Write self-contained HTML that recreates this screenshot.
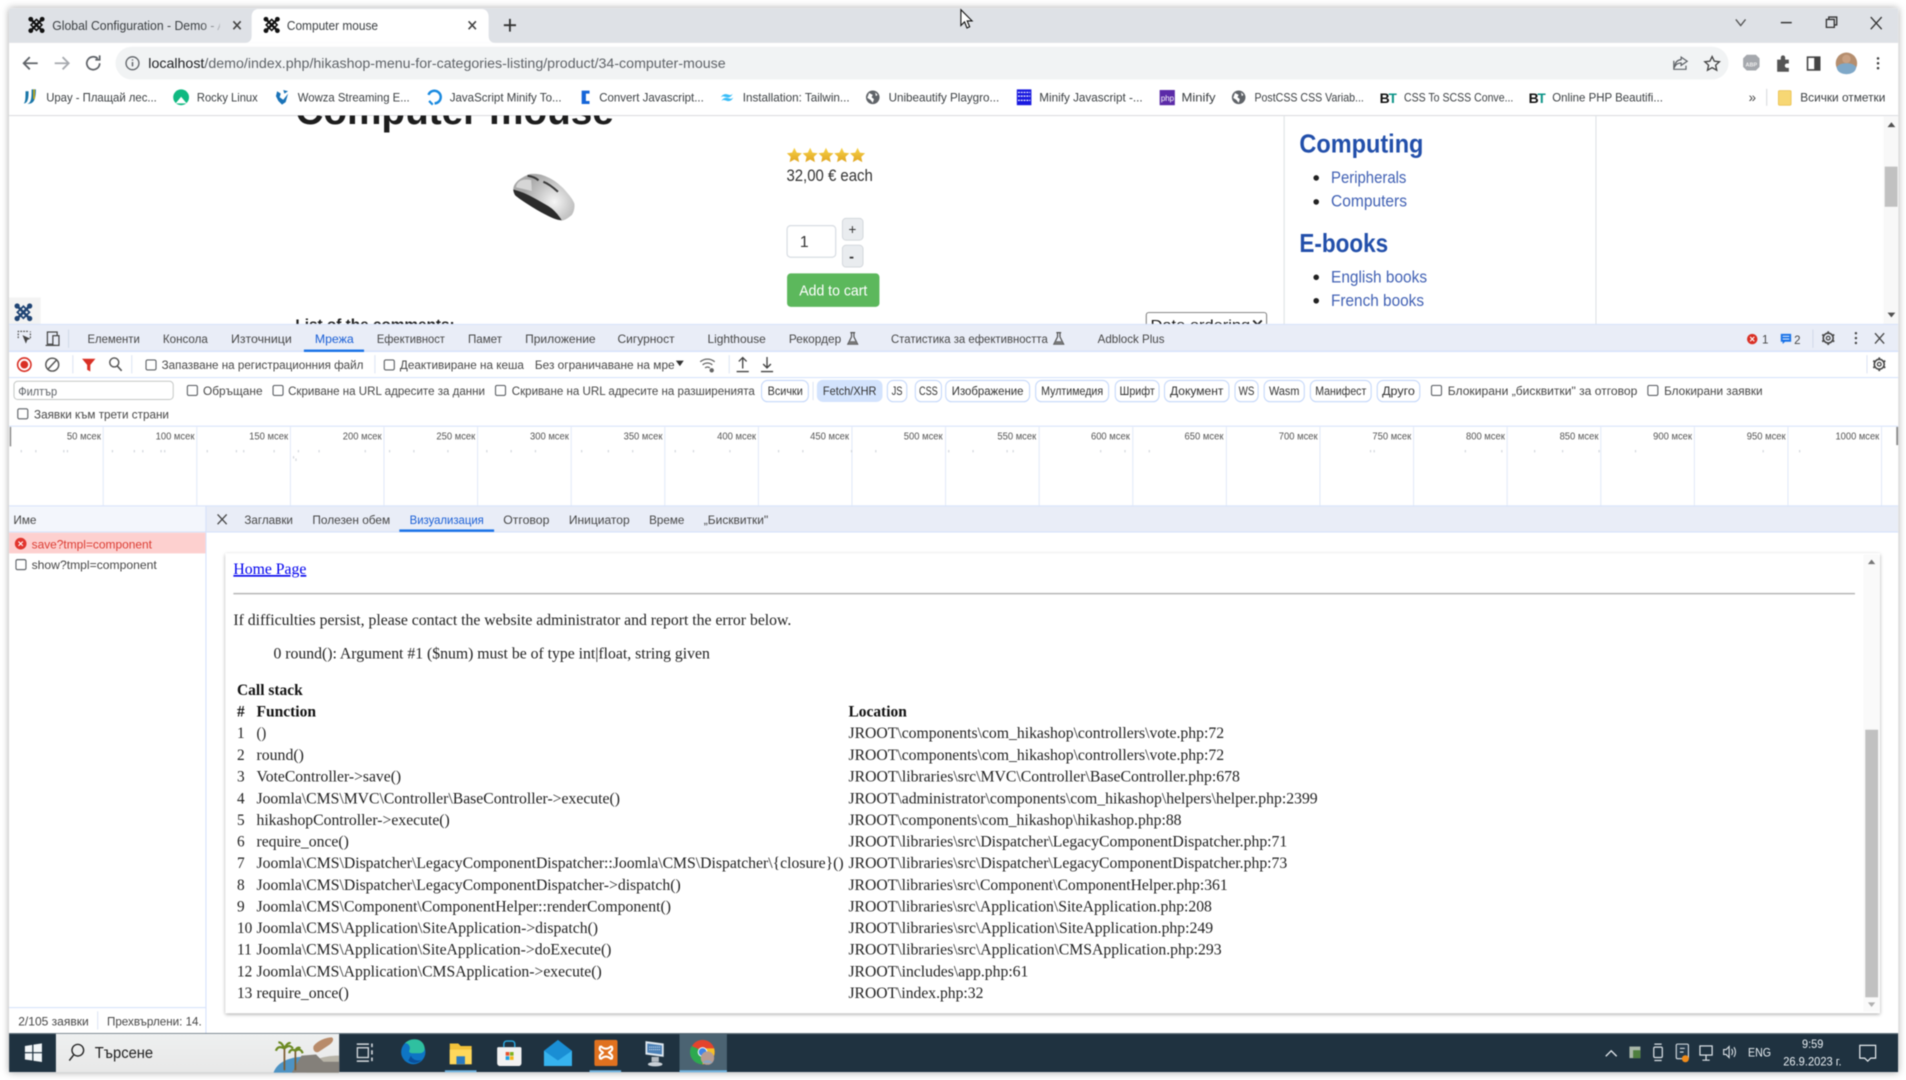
<!DOCTYPE html>
<html lang="bg"><head><meta charset="utf-8"><title>Computer mouse</title>
<style>
html,body{margin:0;padding:0;background:#fff;width:1906px;height:1080px;overflow:hidden}
svg{display:block;position:absolute;left:0;top:0;filter:blur(.4px)}
text{font-family:"Liberation Sans","Noto Sans CJK JP",sans-serif;font-size:10px;fill:#474747;white-space:pre}
.t{font-size:10.5px;fill:#3c4043}
.b{font-size:10px;fill:#3c4043}
.p{font-size:9.8px;fill:#333}
.m{font-size:8.2px;fill:#555}
.r{font-family:"Liberation Serif","Noto Serif CJK SC",serif;font-size:12.6px;fill:#222}
.rb{font-family:"Liberation Serif",serif;font-size:12.6px;font-weight:bold;fill:#111}
.s{font-size:13.5px;fill:#4161b4}
.h{font-size:21px;font-weight:bold;fill:#224faa}
.tb{font-size:9.5px;fill:#e8eef2}
</style></head><body>
<svg width="1906" height="1080" viewBox="0 0 1568 888" preserveAspectRatio="none" xmlns="http://www.w3.org/2000/svg">
<defs>
<filter id="ws" x="-2%" y="-2%" width="104%" height="104%"><feDropShadow dx="0" dy="0" stdDeviation="3" flood-color="#000" flood-opacity=".35"/></filter>
<filter id="bs" x="-2%" y="-3%" width="104%" height="106%"><feDropShadow dx="0" dy="1" stdDeviation="1.5" flood-color="#000" flood-opacity=".35"/></filter>
<linearGradient id="fade" x1="0" x2="1"><stop offset="0" stop-color="#dee1e6" stop-opacity="0"/><stop offset="1" stop-color="#dee1e6"/></linearGradient>
<radialGradient id="sil" gradientUnits="userSpaceOnUse" cx="456" cy="166" r="26"><stop offset="0" stop-color="#f6f6f6"/><stop offset=".55" stop-color="#c8c8c8"/><stop offset="1" stop-color="#a8a8a8"/></radialGradient>
<linearGradient id="gold" x1="0" y1="0" x2="0" y2="1"><stop offset="0" stop-color="#f8d34a"/><stop offset="1" stop-color="#e0a520"/></linearGradient>
<linearGradient id="sky" x1="0" y1="0" x2="0" y2="1"><stop offset="0" stop-color="#eef0f0"/><stop offset="1" stop-color="#e8e8e8"/></linearGradient>
<clipPath id="page"><rect x="8" y="95" width="1541" height="171.6"/></clipPath>
<clipPath id="taba"><rect x="40" y="8" width="141" height="28"/></clipPath>
<clipPath id="sb"><rect x="46" y="850" width="233" height="32"/></clipPath>
<symbol id="j" viewBox="0 0 16 16"><g fill="none" stroke="currentColor" stroke-linecap="round"><path d="M3.500 3.500L12.500 12.500M12.500 3.500L3.500 12.500" stroke-width="2"/><path d="M8 3.200L12.800 8 8 12.800 3.200 8z" stroke-width="1.400"/></g><g fill="currentColor"><circle cx="3" cy="3" r="2.100"/><circle cx="13" cy="3" r="2.100"/><circle cx="3" cy="13" r="2.100"/><circle cx="13" cy="13" r="2.100"/></g></symbol>
<symbol id="cb" viewBox="0 0 9 9"><rect x=".6" y=".6" width="7.8" height="7.8" rx="1.2" fill="#fff" stroke="#5f6368" stroke-width=".9"/></symbol>
<symbol id="gear" viewBox="0 0 16 16"><circle cx="8" cy="8" r="5" fill="none" stroke="#474747" stroke-width="1.6"/><circle cx="8" cy="8" r="1.9" fill="none" stroke="#474747" stroke-width="1.3"/><path d="M8 1v2.5M8 12.5V15M1.9 4.5l2.2 1.3M11.9 10.2l2.2 1.3M14.1 4.5l-2.2 1.3M4.1 10.2l-2.2 1.3" stroke="#474747" stroke-width="1.8"/></symbol>
<symbol id="fl" viewBox="0 0 10 12"><path d="M3 1h4M4 1v3.5L1 10.5h8L6 4.5V1" fill="none" stroke="#555" stroke-width="1"/><path d="M2.2 8h5.6l1 2.5H1.2z" fill="#777"/></symbol>
<symbol id="bt" viewBox="0 0 14 12"><text x="0" y="10.5" style="font-size:11.5px;font-weight:bold;fill:#111">B</text><text x="7.4" y="10.5" style="font-size:11.5px;font-weight:bold;fill:#0d9488">T</text></symbol>
<symbol id="glob" viewBox="0 0 12 12"><circle cx="6" cy="6" r="5.6" fill="#5f6368"/><path d="M3 2.5l3 1.5-1 2 2 1.5-1 3-2-2.5-2.5-1.5zM8 2l2 2-1.5 1z" fill="#fff"/></symbol>
</defs>

<rect width="1568" height="888" fill="#fff"/>
<rect x="7.5" y="6.8" width="1554" height="875" fill="#fff" filter="url(#ws)"/>

<!-- tab strip -->
<rect x="7.5" y="6.8" width="1554" height="28.5" fill="#dee1e6"/>
<path d="M201 35.3c4 0 6-2 6-6V14c0-4 2-6.6 6-6.6h183c4 0 6 2.6 6 6.6v15.3c0 4 2 6 6 6z" fill="#fff"/>
<use href="#j" x="22.5" y="13" width="15" height="15" color="#111"/>
<g clip-path="url(#taba)"><text class="t" x="43" y="24.5" textLength="148" lengthAdjust="spacingAndGlyphs">Global Configuration - Demo - Ad</text></g>
<rect x="165" y="10" width="20" height="24" fill="url(#fade)"/>
<path d="M192 17.5l6 6.5M198 17.5l-6 6.5" stroke="#444" stroke-width="1.3"/>
<use href="#j" x="216" y="13" width="15" height="15" color="#111"/>
<text class="t" x="236" y="24.5" textLength="75" lengthAdjust="spacingAndGlyphs">Computer mouse</text>
<path d="M385.5 17.5l6 6.5M391.5 17.5l-6 6.5" stroke="#444" stroke-width="1.3"/>
<path d="M419.5 15.5v10.5M414.5 20.7h10" stroke="#333" stroke-width="1.5"/>
<!-- window controls -->
<path d="M1428 16l4 5 4-5" fill="none" stroke="#555" stroke-width="1.1"/>
<path d="M1465 18.6h9" stroke="#333" stroke-width="1.2"/>
<path d="M1502.5 16h6.5v6.5h-6.5zM1504.5 16v-2h6.5v6.5h-2" fill="none" stroke="#333" stroke-width="1.1"/>
<path d="M1539 14l9 10M1548 14l-9 10" stroke="#333" stroke-width="1.1"/>

<!-- address row -->
<rect x="7.5" y="35.3" width="1554" height="30" fill="#fff"/>
<rect x="95" y="38.4" width="1327" height="27" rx="13.5" fill="#f1f3f4"/>
<path d="M31 52H20m4.5-5l-5 5 5 5" fill="none" stroke="#5f6368" stroke-width="1.5"/>
<path d="M45 52h11m-4.5-5l5 5-5 5" fill="none" stroke="#a6a9ae" stroke-width="1.5"/>
<path d="M82 52a5.3 5.3 0 1 1-1.6-3.8M82 45.5v3.6h-3.6" fill="none" stroke="#5f6368" stroke-width="1.4"/>
<circle cx="109" cy="52" r="5.3" fill="none" stroke="#5f6368" stroke-width="1.1"/><path d="M109 51v3.6M109 48.8v1" stroke="#5f6368" stroke-width="1.2"/>
<text x="122" y="56" style="font-size:11.5px" textLength="475" lengthAdjust="spacingAndGlyphs"><tspan style="fill:#202124">localhost</tspan><tspan style="fill:#5f6368">/demo/index.php/hikashop-menu-for-categories-listing/product/34-computer-mouse</tspan></text>
<path d="M1383 47l5 3.4-5 3.4v-2c-2.4 0-4 .8-5 2.6 0-3 1.700-5 5-5.400zM1377 50v7h10v-3" fill="none" stroke="#5f6368" stroke-width="1"/>
<path d="M1408.500 46.500l1.800 3.800 4.200.5-3.100 2.800.9 4.100-3.800-2.100-3.800 2.100.9-4.100-3.100-2.800 4.200-.5z" fill="none" stroke="#444" stroke-width="1.100"/>
<path d="M1437 45.500h7.500l3 3v7l-3 3H1437l-3-3v-7z" transform="translate(0,-.5)" fill="#a5a8ad"/><text x="1436" y="54.500" style="font-size:4.500px;fill:#eee;font-weight:bold">ABP</text>
<path d="M1462 49h3v-1.700a1.800 1.800 0 0 1 3.600 0V49h3v3.200h-1.500a1.800 1.800 0 0 0 0 3.600h1.500V59h-9.600z" fill="#555"/>
<rect x="1487" y="47" width="10" height="10.500" fill="none" stroke="#444" stroke-width="1.300"/><rect x="1492.500" y="47" width="4.500" height="10.500" fill="#444"/>
<circle cx="1519" cy="52" r="8.800" fill="#b58e6e"/><path d="M1511 55c2-2 4-3 8-3s6 1 8 3c0 4-4 6-8 6s-8-2-8-6z" fill="#7fa8c8"/><circle cx="1519" cy="48.500" r="3.500" fill="#c9a183"/>
<circle cx="1545" cy="48" r="1.050" fill="#444"/><circle cx="1545" cy="52" r="1.050" fill="#444"/><circle cx="1545" cy="56" r="1.050" fill="#444"/>

<!-- bookmarks -->
<rect x="7.500" y="65.300" width="1554" height="29.700" fill="#fff"/>
<rect x="7.500" y="94.600" width="1554" height="1" fill="#dadce0"/>
<path d="M21 75c0 5 0 9-1.500 10 4 0 4-6 4-10zM26 73.500c0 6 0 11-3.500 12 5 0 7-3 7-12z" fill="#1976a8"/><path d="M28 73.500v8" stroke="#e0b300" stroke-width="1.200"/>
<text class="b" x="38" y="83.500" textLength="91" lengthAdjust="spacingAndGlyphs">Upay - Плащай лес...</text>
<circle cx="149" cy="80" r="6.500" fill="#10b981"/><path d="M149 79.500l4.500 5.500h-9z" fill="#fff"/>
<text class="b" x="162" y="83.500" textLength="50" lengthAdjust="spacingAndGlyphs">Rocky Linux</text>
<path d="M228 75l3 2-1 3 3 2 4-5-2 7-3 2-3-3-2-4zM233 74l4 1-3 2z" fill="#1a73b8"/>
<text class="b" x="245" y="83.500" textLength="92" lengthAdjust="spacingAndGlyphs">Wowza Streaming E...</text>
<path d="M352.500 78a5.200 5.200 0 1 1 5 7" fill="none" stroke="#1a8ae0" stroke-width="2"/><path d="M353 83l3 3" stroke="#1a8ae0" stroke-width="1.800"/>
<text class="b" x="370" y="83.500" textLength="92" lengthAdjust="spacingAndGlyphs">JavaScript Minify To...</text>
<path d="M485 74.500h-6.500v11h6.500v-2.500h-3v-6h3z" fill="#1565d8"/>
<text class="b" x="493" y="83.500" textLength="86" lengthAdjust="spacingAndGlyphs">Convert Javascript...</text>
<path d="M593 80c1-2 3-3 5-2.500s3 1.500 4.800-.5c-1 2.500-3 3.500-5 3s-3-1.500-4.800 0zM593.500 83c1-2 3-3 5-2.500s3 1.500 4.800-.5c-1 2.500-3 3.500-5 3s-3-1.500-4.800 0z" fill="#38bdf8"/>
<text class="b" x="611" y="83.500" textLength="88" lengthAdjust="spacingAndGlyphs">Installation: Tailwin...</text>
<use href="#glob" x="712" y="74" width="12" height="12"/>
<text class="b" x="731" y="83.500" textLength="91" lengthAdjust="spacingAndGlyphs">Unibeautify Playgro...</text>
<rect x="836.500" y="73.500" width="12" height="13" fill="#1a1ae0"/><path d="M837.500 76h10M837.500 79h10M837.500 82.500h10" stroke="#fff" stroke-width="1" stroke-dasharray="1.500 .8"/>
<text class="b" x="855" y="83.500" textLength="85" lengthAdjust="spacingAndGlyphs">Minify Javascript -...</text>
<rect x="954" y="74" width="12.500" height="12.500" fill="#5b2aa8"/><text x="955" y="83" style="font-size:6.500px;fill:#fff">php</text>
<text class="b" x="972" y="83.500" textLength="28" lengthAdjust="spacingAndGlyphs">Minify</text>
<use href="#glob" x="1013" y="74" width="12" height="12"/>
<text class="b" x="1032" y="83.500" textLength="90" lengthAdjust="spacingAndGlyphs">PostCSS CSS Variab...</text>
<use href="#bt" x="1135" y="74" width="14" height="12"/>
<text class="b" x="1155" y="83.500" textLength="90" lengthAdjust="spacingAndGlyphs">CSS To SCSS Conve...</text>
<use href="#bt" x="1257.500" y="74" width="14" height="12"/>
<text class="b" x="1277" y="83.500" textLength="91" lengthAdjust="spacingAndGlyphs">Online PHP Beautifi...</text>
<text x="1438.500" y="84" style="font-size:11px;fill:#444">»</text>
<rect x="1453" y="73" width=".8" height="14" fill="#d5d7db"/>
<rect x="1463" y="74.500" width="10.500" height="12" rx="1" fill="#f7d774" stroke="#e8bf4c" stroke-width=".6"/>
<text class="b" x="1481" y="83.500" textLength="70" lengthAdjust="spacingAndGlyphs">Всички отметки</text>

<!-- web page -->
<rect x="7.500" y="95.500" width="1554" height="171" fill="#fff"/>
<g clip-path="url(#page)">
<text x="243" y="102" style="font-size:33px;font-weight:bold;fill:#1d1d1d" textLength="262" lengthAdjust="spacingAndGlyphs">Computer mouse</text>
<text x="243" y="271" style="font-size:12px;font-weight:bold;fill:#1d1d1d" textLength="131" lengthAdjust="spacingAndGlyphs">List of the comments:</text>
<rect x="943" y="257" width="99" height="25" rx="2" fill="#fff" stroke="#777" stroke-width=".8"/>
<text x="946.500" y="271" style="font-size:11.500px;fill:#111" textLength="82" lengthAdjust="spacingAndGlyphs">Date ordering</text>
<path d="M1031 263.500l3.500 3.500 3.500-3.500" fill="none" stroke="#222" stroke-width="1.500"/>
</g>
<!-- stars -->
<g fill="url(#gold)">
<path d="M653.500 121.500l1.900 4 4.300.5-3.200 3 .9 4.300-3.900-2.200-3.900 2.200.9-4.300-3.200-3 4.300-.5z"/>
<path d="M666.500 121.500l1.900 4 4.300.5-3.200 3 .9 4.300-3.900-2.200-3.900 2.200.9-4.300-3.200-3 4.300-.5z"/>
<path d="M679.500 121.500l1.900 4 4.300.5-3.200 3 .9 4.300-3.900-2.200-3.900 2.200.9-4.300-3.200-3 4.300-.5z"/>
<path d="M692.500 121.500l1.900 4 4.300.5-3.200 3 .9 4.300-3.900-2.200-3.900 2.200.9-4.300-3.200-3 4.300-.5z"/>
<path d="M705.500 121.500l1.900 4 4.300.5-3.200 3 .9 4.300-3.900-2.200-3.900 2.200.9-4.300-3.200-3 4.300-.5z"/>
</g>
<text x="647" y="149" style="font-size:13.400px;fill:#333" textLength="71" lengthAdjust="spacingAndGlyphs">32,00 € each</text>
<rect x="647.500" y="185.500" width="40" height="26" rx="3" fill="#fff" stroke="#d8dde3" stroke-width="1"/>
<text x="658" y="203" style="font-size:13px;fill:#333">1</text>
<rect x="693" y="179.500" width="17" height="18" rx="3" fill="#e9ecef" stroke="#d0d4d9" stroke-width=".7"/><text x="698" y="192.500" style="font-size:11px;fill:#333">+</text>
<rect x="693" y="201.600" width="17" height="18" rx="3" fill="#e9ecef" stroke="#d0d4d9" stroke-width=".7"/><text x="698.500" y="215" style="font-size:12px;font-weight:bold;fill:#333">-</text>
<rect x="647.500" y="224.800" width="76" height="27.500" rx="3" fill="#5cb85c"/>
<text x="657.500" y="243" style="font-size:11.800px;fill:#fff" textLength="56" lengthAdjust="spacingAndGlyphs">Add to cart</text>
<!-- mouse -->
<path d="M422.300 154.900C423 151 426 147 436 143.100C442 142.500 446 143.500 449.700 145.300C456 148 460 151.500 463.500 154.900C468 160 471 163.500 472.500 167.300C473 171 472 174.500 470.300 176.900C467 179.500 465 181 462.100 181.500C458 181 454 179 449.700 176.900C444 174 439 171 433.300 167.300C429 164.500 426 162.500 423.700 160.400C422.500 158.500 422 156.500 422.300 154.900z" fill="url(#sil)"/>
<path d="M422.300 155.800C425 156.500 428 157.500 430.500 158.500C434 160 437 161.500 440.100 163.200C445 166 450 168.500 453.900 171.400C457 174 460 177.500 462.100 181C458 181 454 179 449.700 176.900C444 174 439 171 433.300 167.300C429 164.500 426 162.500 423.700 160.400C422.800 158.500 422.300 157 422.300 155.800z" fill="#2b2b2b"/>
<path d="M434 144.500C438 145 441 146.500 443 148.300M447 149.500C451 151 455 154 459 157.700" fill="none" stroke="#3a3a3a" stroke-width="1.700"/>
<path d="M425 152C427 148 431 147 437 148L437.500 157L424.500 154z" fill="#d6d6d6"/>
<!-- sidebar -->
<rect x="1056" y="95.500" width=".9" height="171" fill="#dee2e6"/>
<rect x="1312.500" y="95.500" width=".9" height="171" fill="#dee2e6"/>
<text class="h" x="1069" y="125.500" textLength="102" lengthAdjust="spacingAndGlyphs">Computing</text>
<circle cx="1082.800" cy="146.300" r="2.300" fill="#222"/>
<text class="s" x="1095" y="150.500" textLength="62" lengthAdjust="spacingAndGlyphs">Peripherals</text>
<circle cx="1082.800" cy="166" r="2.300" fill="#222"/>
<text class="s" x="1095" y="170" textLength="62.500" lengthAdjust="spacingAndGlyphs">Computers</text>
<text class="h" x="1069" y="207" textLength="73" lengthAdjust="spacingAndGlyphs">E-books</text>
<circle cx="1082.800" cy="228" r="2.300" fill="#222"/>
<text class="s" x="1095" y="232.300" textLength="79" lengthAdjust="spacingAndGlyphs">English books</text>
<circle cx="1082.800" cy="247.300" r="2.300" fill="#222"/>
<text class="s" x="1095" y="251.800" textLength="76.500" lengthAdjust="spacingAndGlyphs">French books</text>
<!-- page scrollbar -->
<rect x="1549.500" y="95.500" width="12" height="171" fill="#f8f8f8"/>
<rect x="1550.500" y="137" width="10.500" height="33" fill="#c1c1c1"/>
<path d="M1556 100.500l3.200 4h-6.400z" fill="#505050"/><path d="M1556 261l3.200-4h-6.400z" fill="#505050"/>
<!-- joomla tab -->
<rect x="7.500" y="244.600" width="26" height="22" fill="#f3f3f3"/>
<use href="#j" x="11" y="248" width="16.500" height="17.500" color="#1f4474"/>

<!-- devtools tabbar -->
<rect x="7.500" y="266.600" width="1554" height="22" fill="#e9edf7"/>
<rect x="7.500" y="288.300" width="1554" height="1.200" fill="#d6e2fb"/>
<rect x="7.500" y="266.300" width="1554" height=".8" fill="#d6e2fb"/>
<path d="M15 278v-5.500h8M25 278v-5.500" stroke="#555" stroke-width="1" stroke-dasharray="1.400 1" fill="none"/><path d="M18.500 275.500l6.500 3-2.500 1-1.200 3z" fill="#444"/>
<rect x="39" y="273" width="8" height="10" fill="none" stroke="#444" stroke-width="1"/><rect x="43.500" y="276" width="5" height="8" fill="#e9edf7" stroke="#444" stroke-width="1"/><path d="M37.500 284h8" stroke="#444" stroke-width="1"/>
<rect x="56" y="271" width=".8" height="15" fill="#d0d8e8"/>
<text x="72" y="282" textLength="43" lengthAdjust="spacingAndGlyphs">Елементи</text>
<text x="134" y="282" textLength="37" lengthAdjust="spacingAndGlyphs">Консола</text>
<text x="190" y="282" textLength="50" lengthAdjust="spacingAndGlyphs">Източници</text>
<text x="259" y="282" textLength="32" lengthAdjust="spacingAndGlyphs" style="fill:#1a5fd6">Мрежа</text>
<rect x="250" y="287.400" width="49.500" height="2" fill="#1a73e8"/>
<text x="310" y="282" textLength="56" lengthAdjust="spacingAndGlyphs">Ефективност</text>
<text x="385" y="282" textLength="28" lengthAdjust="spacingAndGlyphs">Памет</text>
<text x="432" y="282" textLength="58" lengthAdjust="spacingAndGlyphs">Приложение</text>
<text x="508" y="282" textLength="47" lengthAdjust="spacingAndGlyphs">Сигурност</text>
<text x="582" y="282" textLength="48" lengthAdjust="spacingAndGlyphs">Lighthouse</text>
<text x="649" y="282" textLength="43" lengthAdjust="spacingAndGlyphs">Рекордер</text>
<use href="#fl" x="696.500" y="272.500" width="10" height="12"/>
<text x="733" y="282" textLength="129" lengthAdjust="spacingAndGlyphs">Статистика за ефективността</text>
<use href="#fl" x="866" y="272.500" width="10" height="12"/>
<text x="903" y="282" textLength="55" lengthAdjust="spacingAndGlyphs">Adblock Plus</text>
<circle cx="1441.500" cy="278.800" r="4.300" fill="#d93025"/><path d="M1439.800 277l3.400 3.600M1443.200 277l-3.400 3.600" stroke="#fff" stroke-width=".9"/>
<text x="1449.500" y="282.500" style="font-size:9.500px">1</text>
<path d="M1465 274.500h8.500v6.500h-5l-2 1.800V281H1465z" fill="#1a73e8"/><path d="M1466.500 276.500h5.500M1466.500 278.800h5.500" stroke="#fff" stroke-width=".7"/>
<text x="1476" y="283" style="font-size:9.500px">2</text>
<rect x="1491" y="271" width=".8" height="15" fill="#d0d8e8"/>
<use href="#gear" x="1497.500" y="271.500" width="13" height="13"/>
<circle cx="1526.800" cy="274" r="1" fill="#474747"/><circle cx="1526.800" cy="278" r="1" fill="#474747"/><circle cx="1526.800" cy="282" r="1" fill="#474747"/>
<path d="M1542.500 274l7.500 8.500M1550 274l-7.500 8.500" stroke="#474747" stroke-width="1.100"/>

<!-- toolbar row -->
<rect x="7.500" y="289.500" width="1554" height="20.500" fill="#fff"/>
<rect x="7.500" y="310" width="1554" height=".9" fill="#d6e2fb"/>
<circle cx="20" cy="299.800" r="5.500" fill="none" stroke="#d93025" stroke-width="1.300"/><circle cx="20" cy="299.800" r="3.200" fill="#d93025"/>
<circle cx="43" cy="299.800" r="5.300" fill="none" stroke="#555" stroke-width="1.200"/><path d="M39.500 303.500l7-7.500" stroke="#555" stroke-width="1.200"/>
<rect x="59.500" y="292" width=".8" height="15" fill="#dbe3f3"/>
<path d="M67.500 295h11l-4.200 5v5.500l-2.600-1.500v-4z" fill="#d93025"/>
<circle cx="94" cy="298" r="3.700" fill="none" stroke="#555" stroke-width="1.200"/><path d="M96.500 301l3.600 3.900" stroke="#555" stroke-width="1.300"/>
<rect x="108" y="292" width=".8" height="15" fill="#dbe3f3"/>
<use href="#cb" x="119.500" y="295.300" width="9.500" height="9.500"/>
<text x="133" y="303.300" textLength="166" lengthAdjust="spacingAndGlyphs">Запазване на регистрационния файл</text>
<rect x="308" y="292" width=".8" height="15" fill="#dbe3f3"/>
<use href="#cb" x="315.500" y="295.300" width="9.500" height="9.500"/>
<text x="329" y="303.300" textLength="102" lengthAdjust="spacingAndGlyphs">Деактивиране на кеша</text>
<text x="440" y="303.300" textLength="115" lengthAdjust="spacingAndGlyphs">Без ограничаване на мре</text>
<path d="M556 296.500h6.500l-3.200 4.500z" fill="#333"/>
<path d="M576 297.500c3.500-3 8.500-3 12 0M578 300c2.400-2 5.600-2 8 0M580 302.500c1.300-1 2.700-1 4 0" fill="none" stroke="#666" stroke-width="1"/><circle cx="585.500" cy="304.500" r="1.800" fill="#666"/>
<rect x="599.500" y="292" width=".8" height="15" fill="#dbe3f3"/>
<path d="M611 303v-9m-3.200 3.200l3.200-3.200 3.200 3.200M606 305.500h10" fill="none" stroke="#444" stroke-width="1.100"/>
<path d="M631 293.500v9m-3.200-3.200l3.200 3.200 3.200-3.200M626 305.500h10" fill="none" stroke="#444" stroke-width="1.100"/>
<rect x="1535.500" y="292" width=".8" height="15" fill="#dbe3f3"/>
<use href="#gear" x="1539.500" y="293" width="13" height="13"/>

<!-- filter row -->
<rect x="7.500" y="311" width="1554" height="39.200" fill="#fff"/>
<rect x="11.500" y="313.500" width="131" height="15" rx="3" fill="#fff" stroke="#c4c7c5" stroke-width=".8"/>
<text x="15" y="325" textLength="32" lengthAdjust="spacingAndGlyphs" style="fill:#5f6368">Филтър</text>
<use href="#cb" x="153.500" y="316.300" width="9.500" height="9.500"/>
<text x="167" y="324.800" textLength="49" lengthAdjust="spacingAndGlyphs">Обръщане</text>
<use href="#cb" x="224" y="316.300" width="9.500" height="9.500"/>
<text x="237" y="324.800" textLength="162" lengthAdjust="spacingAndGlyphs">Скриване на URL адресите за данни</text>
<use href="#cb" x="407" y="316.300" width="9.500" height="9.500"/>
<text x="421" y="324.800" textLength="200" lengthAdjust="spacingAndGlyphs">Скриване на URL адресите на разширенията</text>
<g fill="#fff" stroke="#c5d8fa" stroke-width=".9">
<rect x="626.500" y="312.800" width="38.500" height="17.500" rx="5"/>
<rect x="730" y="312.800" width="16" height="17.500" rx="5"/>
<rect x="753" y="312.800" width="21.500" height="17.500" rx="5"/>
<rect x="778" y="312.800" width="69" height="17.500" rx="5"/>
<rect x="852" y="312.800" width="60" height="17.500" rx="5"/>
<rect x="917.500" y="312.800" width="36" height="17.500" rx="5"/>
<rect x="958" y="312.800" width="53" height="17.500" rx="5"/>
<rect x="1016" y="312.800" width="19" height="17.500" rx="5"/>
<rect x="1040" y="312.800" width="33" height="17.500" rx="5"/>
<rect x="1078" y="312.800" width="50" height="17.500" rx="5"/>
<rect x="1133" y="312.800" width="35" height="17.500" rx="5"/>
</g>
<rect x="672" y="312.300" width="54" height="18.200" rx="5" fill="#d3e3fd"/>
<rect x="668.500" y="314" width=".8" height="15" fill="#dbe3f3"/>
<g>
<text class="p" x="631.500" y="324.800" textLength="29" lengthAdjust="spacingAndGlyphs">Всички</text>
<text class="p" x="677" y="324.800" textLength="44" lengthAdjust="spacingAndGlyphs">Fetch/XHR</text>
<text class="p" x="733.500" y="324.800" textLength="9" lengthAdjust="spacingAndGlyphs">JS</text>
<text class="p" x="756" y="324.800" textLength="15.500" lengthAdjust="spacingAndGlyphs">CSS</text>
<text class="p" x="783" y="324.800" textLength="59" lengthAdjust="spacingAndGlyphs">Изображение</text>
<text class="p" x="856.500" y="324.800" textLength="51" lengthAdjust="spacingAndGlyphs">Мултимедия</text>
<text class="p" x="921" y="324.800" textLength="29" lengthAdjust="spacingAndGlyphs">Шрифт</text>
<text class="p" x="962.500" y="324.800" textLength="44" lengthAdjust="spacingAndGlyphs">Документ</text>
<text class="p" x="1019" y="324.800" textLength="13" lengthAdjust="spacingAndGlyphs">WS</text>
<text class="p" x="1044" y="324.800" textLength="25" lengthAdjust="spacingAndGlyphs">Wasm</text>
<text class="p" x="1082" y="324.800" textLength="42" lengthAdjust="spacingAndGlyphs">Манифест</text>
<text class="p" x="1137" y="324.800" textLength="27" lengthAdjust="spacingAndGlyphs">Друго</text>
</g>
<use href="#cb" x="1177" y="316.300" width="9.500" height="9.500"/>
<text x="1191" y="324.800" textLength="156" lengthAdjust="spacingAndGlyphs">Блокирани „бисквитки" за отговор</text>
<use href="#cb" x="1355" y="316.300" width="9.500" height="9.500"/>
<text x="1369" y="324.800" textLength="81" lengthAdjust="spacingAndGlyphs">Блокирани заявки</text>
<use href="#cb" x="14" y="335.500" width="9.500" height="9.500"/>
<text x="28" y="344" textLength="111" lengthAdjust="spacingAndGlyphs">Заявки към трети страни</text>
<rect x="7.500" y="350" width="1554" height=".9" fill="#d6e2fb"/>

<!-- timeline -->
<rect x="7.500" y="351" width="1554" height="64.500" fill="#fff"/>
<g fill="#dfe8f8">
<rect x="84.500" y="351" width=".8" height="64.500"/><rect x="161.500" y="351" width=".8" height="64.500"/><rect x="238.500" y="351" width=".8" height="64.500"/><rect x="315.500" y="351" width=".8" height="64.500"/><rect x="392.500" y="351" width=".8" height="64.500"/><rect x="469.500" y="351" width=".8" height="64.500"/><rect x="546.500" y="351" width=".8" height="64.500"/><rect x="623.500" y="351" width=".8" height="64.500"/><rect x="700.500" y="351" width=".8" height="64.500"/><rect x="777.500" y="351" width=".8" height="64.500"/><rect x="854.500" y="351" width=".8" height="64.500"/><rect x="931.500" y="351" width=".8" height="64.500"/><rect x="1008.500" y="351" width=".8" height="64.500"/><rect x="1085.500" y="351" width=".8" height="64.500"/><rect x="1162.500" y="351" width=".8" height="64.500"/><rect x="1239.500" y="351" width=".8" height="64.500"/><rect x="1316.500" y="351" width=".8" height="64.500"/><rect x="1393.500" y="351" width=".8" height="64.500"/><rect x="1470.500" y="351" width=".8" height="64.500"/><rect x="1547.500" y="351" width=".8" height="64.500"/>
</g>
<g>
<text class="m" x="55" y="361.500" textLength="28" lengthAdjust="spacingAndGlyphs">50 мсек</text>
<text class="m" x="128" y="361.500" textLength="32" lengthAdjust="spacingAndGlyphs">100 мсек</text>
<text class="m" x="205" y="361.500" textLength="32" lengthAdjust="spacingAndGlyphs">150 мсек</text>
<text class="m" x="282" y="361.500" textLength="32" lengthAdjust="spacingAndGlyphs">200 мсек</text>
<text class="m" x="359" y="361.500" textLength="32" lengthAdjust="spacingAndGlyphs">250 мсек</text>
<text class="m" x="436" y="361.500" textLength="32" lengthAdjust="spacingAndGlyphs">300 мсек</text>
<text class="m" x="513" y="361.500" textLength="32" lengthAdjust="spacingAndGlyphs">350 мсек</text>
<text class="m" x="590" y="361.500" textLength="32" lengthAdjust="spacingAndGlyphs">400 мсек</text>
<text class="m" x="666.500" y="361.500" textLength="32" lengthAdjust="spacingAndGlyphs">450 мсек</text>
<text class="m" x="743.500" y="361.500" textLength="32" lengthAdjust="spacingAndGlyphs">500 мсек</text>
<text class="m" x="820.500" y="361.500" textLength="32" lengthAdjust="spacingAndGlyphs">550 мсек</text>
<text class="m" x="897.500" y="361.500" textLength="32" lengthAdjust="spacingAndGlyphs">600 мсек</text>
<text class="m" x="974.500" y="361.500" textLength="32" lengthAdjust="spacingAndGlyphs">650 мсек</text>
<text class="m" x="1052" y="361.500" textLength="32" lengthAdjust="spacingAndGlyphs">700 мсек</text>
<text class="m" x="1129" y="361.500" textLength="32" lengthAdjust="spacingAndGlyphs">750 мсек</text>
<text class="m" x="1206" y="361.500" textLength="32" lengthAdjust="spacingAndGlyphs">800 мсек</text>
<text class="m" x="1283" y="361.500" textLength="32" lengthAdjust="spacingAndGlyphs">850 мсек</text>
<text class="m" x="1360" y="361.500" textLength="32" lengthAdjust="spacingAndGlyphs">900 мсек</text>
<text class="m" x="1437" y="361.500" textLength="32" lengthAdjust="spacingAndGlyphs">950 мсек</text>
<text class="m" x="1510" y="361.500" textLength="36" lengthAdjust="spacingAndGlyphs">1000 мсек</text>
</g>
<path d="M17 371h1M29 371h1M52 371h1M55 371h1M92 371h1M110 371h1M117 371h1M132 371h1M135 371h1M170 371h1M194 371h1M200 371h1M225 371h1M245 371h1M262 371h1M300 371h1M320 371h1M340 371h1M368 371h1M400 371h1M420 371h1M440 371h1M478 371h1M500 371h1M520 371h1M555 371h1M570 371h1M600 371h1M640 371h1M660 371h1M700 371h1M720 371h1M780 371h1M800 371h1M828 371h1M833 371h1M905 371h1M925 371h1M945 371h1M1127 371h1M1130 371h1M1205 371h1M1235 371h1M1262 371h1M1285 371h1M1315 371h1M1345 371h1M1450 371h1M1480 371h1M241 376h1M243 378h1" stroke="#d3d7dd" stroke-width="2" fill="none"/>
<rect x="8" y="351" width="1.200" height="16" fill="#888"/>
<rect x="1560" y="351" width="1.500" height="15" fill="#888"/>
<rect x="7.500" y="415.500" width="1554" height=".9" fill="#d6e2fb"/>

<!-- detail header -->
<rect x="7.500" y="416.400" width="162" height="21" fill="#f3f6fc"/>
<rect x="169" y="416.400" width="1392.500" height="21" fill="#e9edf7"/>
<rect x="7.500" y="437" width="1554" height=".9" fill="#d6e2fb"/>
<text x="11" y="431" textLength="19" lengthAdjust="spacingAndGlyphs">Име</text>
<path d="M179 423l7.500 8M186.500 423l-7.500 8" stroke="#474747" stroke-width="1.100"/>
<text x="201" y="431" textLength="40" lengthAdjust="spacingAndGlyphs">Заглавки</text>
<text x="257" y="431" textLength="64" lengthAdjust="spacingAndGlyphs">Полезен обем</text>
<text x="337" y="431" textLength="61" lengthAdjust="spacingAndGlyphs" style="fill:#1a5fd6">Визуализация</text>
<rect x="328.500" y="435.300" width="78" height="2" fill="#1a73e8"/>
<text x="414" y="431" textLength="38" lengthAdjust="spacingAndGlyphs">Отговор</text>
<text x="468" y="431" textLength="50" lengthAdjust="spacingAndGlyphs">Инициатор</text>
<text x="534" y="431" textLength="29" lengthAdjust="spacingAndGlyphs">Време</text>
<text x="579" y="431" textLength="53" lengthAdjust="spacingAndGlyphs">„Бисквитки"</text>

<!-- left panel -->
<rect x="7.500" y="438" width="161.500" height="411" fill="#fff"/>
<rect x="169" y="416.400" width=".9" height="433" fill="#d6e2fb"/>
<rect x="7.500" y="438" width="161.500" height="17" fill="#fdd0cf"/>
<circle cx="17" cy="447" r="4.800" fill="#e2352d"/><path d="M15.200 445.200l3.600 3.600M18.800 445.200l-3.600 3.600" stroke="#fff" stroke-width=".9"/>
<text x="26" y="451" textLength="99" lengthAdjust="spacingAndGlyphs" style="fill:#dc3d33">save?tmpl=component</text>
<use href="#cb" x="12.500" y="459.500" width="9.500" height="9.500"/>
<text x="26" y="468" textLength="103" lengthAdjust="spacingAndGlyphs">show?tmpl=component</text>
<rect x="7.500" y="828" width="161.500" height=".9" fill="#d6e2fb"/>
<text x="15" y="843" textLength="58" lengthAdjust="spacingAndGlyphs" style="font-size:9.600px">2/105 заявки</text>
<rect x="80" y="831.500" width=".8" height="15" fill="#dbe3f3"/>
<text x="88" y="843" textLength="78" lengthAdjust="spacingAndGlyphs" style="font-size:9.600px">Прехвърлени: 14.</text>

<!-- preview -->
<rect x="170" y="438" width="1391.500" height="411.500" fill="#fff"/>
<rect x="185.500" y="455" width="1361" height="378" fill="#fff" filter="url(#bs)"/>
<text x="192" y="472" style="font-family:'Liberation Serif',serif;font-size:13.200px;fill:#0000ee;text-decoration:underline" textLength="60" lengthAdjust="spacingAndGlyphs">Home Page</text>
<rect x="192" y="487.500" width="1334" height="1.200" fill="#b4b4b4"/>
<text class="r" x="192" y="514" textLength="459" lengthAdjust="spacingAndGlyphs">If difficulties persist, please contact the website administrator and report the error below.</text>
<text class="r" x="225" y="541.500" textLength="359" lengthAdjust="spacingAndGlyphs">0 round(): Argument #1 ($num) must be of type int|float, string given</text>
<text class="rb" x="195" y="571.500" textLength="54" lengthAdjust="spacingAndGlyphs">Call stack</text>
<text class="rb" x="195" y="589">#</text>
<text class="rb" x="211" y="589" textLength="49" lengthAdjust="spacingAndGlyphs">Function</text>
<text class="rb" x="698" y="589" textLength="48" lengthAdjust="spacingAndGlyphs">Location</text>

<text class="r" x="195" y="607">1</text><text class="r" x="211" y="607" textLength="8" lengthAdjust="spacingAndGlyphs">()</text><text class="r" x="698" y="607" textLength="309" lengthAdjust="spacingAndGlyphs">JROOT\components\com_hikashop\controllers\vote.php:72</text>
<text class="r" x="195" y="625">2</text><text class="r" x="211" y="625" textLength="39" lengthAdjust="spacingAndGlyphs">round()</text><text class="r" x="698" y="625" textLength="309" lengthAdjust="spacingAndGlyphs">JROOT\components\com_hikashop\controllers\vote.php:72</text>
<text class="r" x="195" y="642.700">3</text><text class="r" x="211" y="642.700" textLength="119" lengthAdjust="spacingAndGlyphs">VoteController-&gt;save()</text><text class="r" x="698" y="642.700" textLength="322" lengthAdjust="spacingAndGlyphs">JROOT\libraries\src\MVC\Controller\BaseController.php:678</text>
<text class="r" x="195" y="660.500">4</text><text class="r" x="211" y="660.500" textLength="299" lengthAdjust="spacingAndGlyphs">Joomla\CMS\MVC\Controller\BaseController-&gt;execute()</text><text class="r" x="698" y="660.500" textLength="386" lengthAdjust="spacingAndGlyphs">JROOT\administrator\components\com_hikashop\helpers\helper.php:2399</text>
<text class="r" x="195" y="678.300">5</text><text class="r" x="211" y="678.300" textLength="159" lengthAdjust="spacingAndGlyphs">hikashopController-&gt;execute()</text><text class="r" x="698" y="678.300" textLength="274" lengthAdjust="spacingAndGlyphs">JROOT\components\com_hikashop\hikashop.php:88</text>
<text class="r" x="195" y="696">6</text><text class="r" x="211" y="696" textLength="76" lengthAdjust="spacingAndGlyphs">require_once()</text><text class="r" x="698" y="696" textLength="361" lengthAdjust="spacingAndGlyphs">JROOT\libraries\src\Dispatcher\LegacyComponentDispatcher.php:71</text>
<text class="r" x="195" y="713.800">7</text><text class="r" x="211" y="713.800" textLength="483" lengthAdjust="spacingAndGlyphs">Joomla\CMS\Dispatcher\LegacyComponentDispatcher::Joomla\CMS\Dispatcher\{closure}()</text><text class="r" x="698" y="713.800" textLength="361" lengthAdjust="spacingAndGlyphs">JROOT\libraries\src\Dispatcher\LegacyComponentDispatcher.php:73</text>
<text class="r" x="195" y="731.700">8</text><text class="r" x="211" y="731.700" textLength="349" lengthAdjust="spacingAndGlyphs">Joomla\CMS\Dispatcher\LegacyComponentDispatcher-&gt;dispatch()</text><text class="r" x="698" y="731.700" textLength="312" lengthAdjust="spacingAndGlyphs">JROOT\libraries\src\Component\ComponentHelper.php:361</text>
<text class="r" x="195" y="749.500">9</text><text class="r" x="211" y="749.500" textLength="341" lengthAdjust="spacingAndGlyphs">Joomla\CMS\Component\ComponentHelper::renderComponent()</text><text class="r" x="698" y="749.500" textLength="299" lengthAdjust="spacingAndGlyphs">JROOT\libraries\src\Application\SiteApplication.php:208</text>
<text class="r" x="195" y="767.300">10</text><text class="r" x="211" y="767.300" textLength="281" lengthAdjust="spacingAndGlyphs">Joomla\CMS\Application\SiteApplication-&gt;dispatch()</text><text class="r" x="698" y="767.300" textLength="300" lengthAdjust="spacingAndGlyphs">JROOT\libraries\src\Application\SiteApplication.php:249</text>
<text class="r" x="195" y="785">11</text><text class="r" x="211" y="785" textLength="292" lengthAdjust="spacingAndGlyphs">Joomla\CMS\Application\SiteApplication-&gt;doExecute()</text><text class="r" x="698" y="785" textLength="307" lengthAdjust="spacingAndGlyphs">JROOT\libraries\src\Application\CMSApplication.php:293</text>
<text class="r" x="195" y="803">12</text><text class="r" x="211" y="803" textLength="284" lengthAdjust="spacingAndGlyphs">Joomla\CMS\Application\CMSApplication-&gt;execute()</text><text class="r" x="698" y="803" textLength="148" lengthAdjust="spacingAndGlyphs">JROOT\includes\app.php:61</text>
<text class="r" x="195" y="820.700">13</text><text class="r" x="211" y="820.700" textLength="76" lengthAdjust="spacingAndGlyphs">require_once()</text><text class="r" x="698" y="820.700" textLength="111" lengthAdjust="spacingAndGlyphs">JROOT\index.php:32</text>
<!-- preview scrollbar -->
<rect x="1533" y="456" width="13" height="376" fill="#fafafa"/>
<rect x="1534.500" y="600" width="10.500" height="220" fill="#c1c1c1"/>
<path d="M1539.700 460l3 3.800h-6z" fill="#777"/><path d="M1539.700 828l3-3.800h-6z" fill="#b0b0b0"/>

<!-- taskbar -->
<rect x="7.500" y="849.500" width="1554" height="32" fill="#1f3240"/>
<rect x="7.500" y="849.500" width="1554" height=".8" fill="#5f6f7a"/>
<g fill="#f2f6f8"><path d="M20.500 860l6-.9v6h-6zM27.500 858.900l7-1v7.200h-7zM20.500 866h6v6l-6-.9zM27.500 866h7v7.200l-7-1z"/></g>
<rect x="46" y="850" width="233" height="31.500" fill="url(#sky)"/>
<g clip-path="url(#sb)">
<path d="M252 882c2-10 12-14 27-14v14z" fill="#b8b4a8"/>
<path d="M225 882c3-9 14-13 24-13l-6 13z" fill="#4d93c4"/>
<path d="M240 882l8-14 12-1 6 6 14 0v9z" fill="#84807a"/>
<path d="M258 860c3-4 10-7 15-7 2 1 1 4-2 6l-9 6c-3 1-5-2-4-5z" fill="#b88b6a"/>
<path d="M234 880v-18M243 880v-16" stroke="#7c5b2f" stroke-width="1.400"/>
<path d="M234 862c-4-2-6-1-7 2M234 862c4-3 5-2 7 0M234 862c-2-4-3-5-5-5M234 862c2-4 4-5 5-4M243 864c-3-2-5 0-5 2M243 864c3-2 5-1 6 2M243 864c1-3 3-3 4-2" stroke="#6c8a22" stroke-width="1.800" fill="none"/>
</g>
<circle cx="64" cy="863.500" r="4.800" fill="none" stroke="#222" stroke-width="1.100"/><path d="M60.500 867.500l-3.500 4.500" stroke="#222" stroke-width="1.200"/>
<text x="78" y="870" style="font-size:13px;fill:#222" textLength="48" lengthAdjust="spacingAndGlyphs">Търсене</text>
<path d="M293.500 858.500h10M293.500 872.500h10" stroke="#d5dade" stroke-width="1.200"/><rect x="294" y="861.500" width="9" height="8" fill="none" stroke="#d5dade" stroke-width="1.100"/><path d="M306 858v3M306 863.500v3.500M306 869.500v3" stroke="#d5dade" stroke-width="1.300"/>
<!-- edge -->
<circle cx="340" cy="865" r="10" fill="#0e75c4"/><path d="M333 858c4-5 14-5 16 2 1.200 4-1 6-4 6h-5c-3 0-4-1-3-3 1-3-2-6-4-5z" fill="#2fc0a0"/><path d="M338 868c1 3 5 5 9 3.500-3 3-8 3.500-11 .5z" fill="#0a4f9a"/>
<!-- explorer -->
<path d="M370 858h7l2 2h9v15h-18z" fill="#f2c23a"/><rect x="370" y="863" width="18" height="12" fill="#ffd85c"/><rect x="375.500" y="868.500" width="7" height="6.500" fill="#2a7ac0"/>
<rect x="366" y="880" width="26" height="1.600" fill="#6fb3e0"/>
<!-- store -->
<path d="M410 861h18c.6 0 1 .4 1 1v12c0 1.500-1 2.500-2.500 2.500h-15c-1.500 0-2.500-1-2.500-2.500v-12c0-.6.400-1 1-1z" fill="#f2f2f2"/><path d="M414.500 861v-2.500c0-1.500 1-2.500 2.500-2.500h4c1.500 0 2.500 1 2.500 2.500v2.500" fill="none" stroke="#2ba9e0" stroke-width="1.200"/>
<rect x="416" y="865" width="3" height="3" fill="#e8502a"/><rect x="419.500" y="865" width="3" height="3" fill="#7fb21f"/><rect x="416" y="868.500" width="3" height="3" fill="#19a0e3"/><rect x="419.500" y="868.500" width="3" height="3" fill="#f6b91c"/>
<!-- mail -->
<path d="M447.500 864l11.500-9 11.500 9v12.500h-23z" fill="#1a8ed4"/><path d="M447.500 864l11.500 8 11.500-8v12.500h-23z" fill="#36b3ee"/>
<!-- xampp -->
<rect x="489" y="855" width="19" height="21.500" rx="1.500" fill="#e0711f"/><path d="M494 860c3 3 6 3 9 0M494 871c3-3 6-3 9 0M494 860c-2 4 1 4 2 5.500 -1 1.500-4 1.500-2 5.500M503 860c2 4-1 4-2 5.500 1 1.500 4 1.500 2 5.500" fill="none" stroke="#fff" stroke-width="1.700"/>
<rect x="485" y="880" width="26" height="1.600" fill="#6fb3e0"/>
<!-- computer -->
<path d="M531 856l15 2v11l-15-2z" fill="#dfe8ef"/><path d="M532.500 858l12 1.500v7.500l-12-1.500z" fill="#4a7fb5"/><path d="M534 861h9M534 863h9" stroke="#c6dcee" stroke-width=".8" stroke-dasharray="1 .6"/><rect x="536" y="869" width="6" height="4" fill="#b5bcc2"/><ellipse cx="539" cy="875" rx="6" ry="1.800" fill="#c9d0d6"/>
<!-- chrome -->
<rect x="559" y="850" width="39" height="31.500" fill="#4b6372"/>
<circle cx="578" cy="865" r="10" fill="#e4432d"/><path d="M578 875a10 10 0 0 1-8.700-15l5 8.700z" fill="#2da94f"/><path d="M569 860a10 10 0 0 0 9 15l5-8.700z" fill="#2da94f"/><path d="M578 875a10 10 0 0 0 9.500-13h-9.500z" fill="#f6c026"/><circle cx="578" cy="865" r="4" fill="#fff"/><circle cx="578" cy="865" r="3.200" fill="#3f86e8"/>
<circle cx="582" cy="870" r="5.500" fill="#b89d92"/><path d="M578 874c1-3 7-3 8 0z" fill="#8aa7c4"/>
<rect x="559" y="880" width="39" height="1.600" fill="#6fb3e0"/>
<!-- tray -->
<path d="M1321 868.500l4.500-4.500 4.500 4.500" fill="none" stroke="#dfe5ea" stroke-width="1.100"/>
<rect x="1340.500" y="860.500" width="9" height="9.500" fill="#a9b7a9"/><rect x="1343.500" y="863.500" width="6" height="6.500" fill="#4f7f3f"/>
<rect x="1360.500" y="861" width="7" height="8.500" rx="1" fill="none" stroke="#dde3e8" stroke-width="1"/><path d="M1361 858.500h6M1361 872h6" stroke="#dde3e8" stroke-width="1"/>
<rect x="1379" y="858.500" width="10" height="12" rx="1" fill="#24394a" stroke="#dde3e8" stroke-width=".9"/><path d="M1382 862h4M1382 865h3" stroke="#dde3e8" stroke-width=".9"/><circle cx="1386.500" cy="870.500" r="2.900" fill="#f28c1a"/>
<rect x="1398.500" y="860" width="10" height="7.500" fill="none" stroke="#dde3e8" stroke-width="1"/><path d="M1403.500 867.500v4m-3 .2h6" stroke="#dde3e8" stroke-width="1"/>
<path d="M1418 863h2l2.500-2.500v9L1420 867h-2zM1424.500 862.500c1 1.500 1 3.500 0 5M1426.500 861c1.500 2.500 1.500 5.500 0 8" fill="none" stroke="#dde3e8" stroke-width=".9"/>
<text class="tb" x="1438" y="868.500" textLength="19" lengthAdjust="spacingAndGlyphs">ENG</text>
<text class="tb" x="1482.500" y="861.500" textLength="17.500" lengthAdjust="spacingAndGlyphs">9:59</text>
<text class="tb" x="1467" y="876" textLength="48" lengthAdjust="spacingAndGlyphs">26.9.2023 г.</text>
<path d="M1530 859.500h13v10.500h-4l-2.500 2.500-2.500-2.500h-4z" fill="none" stroke="#e6ebef" stroke-width="1"/>
<!-- cursor -->
<path d="M790.500 8v13l3-3 2 5 2.200-1-2-4.800h4z" fill="#fff" stroke="#111" stroke-width=".9"/>
</svg>
</body></html>
